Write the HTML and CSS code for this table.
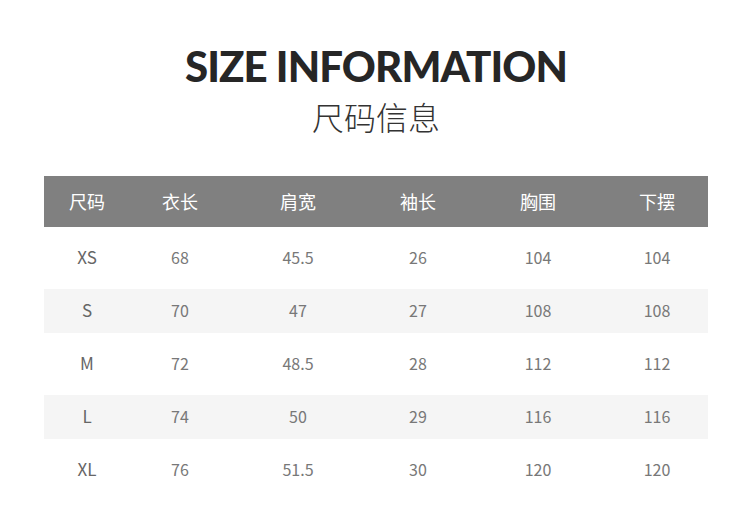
FILE: index.html
```html
<!DOCTYPE html>
<html lang="zh">
<head>
<meta charset="utf-8">
<link rel="stylesheet" href="styles.css">
</head>
<body>
<div class="page">
  <header class="heading">
    <h1 class="title-en">SIZE INFORMATION</h1>
    <h2 class="title-cn">尺码信息</h2>
  </header>
  <div class="table">
    <div class="row head">
      <div class="cell">尺码</div><div class="cell">衣长</div><div class="cell">肩宽</div><div class="cell">袖长</div><div class="cell">胸围</div><div class="cell">下摆</div>
    </div>
    <div class="row">
      <div class="cell size">XS</div><div class="cell">68</div><div class="cell">45.5</div><div class="cell">26</div><div class="cell">104</div><div class="cell">104</div>
    </div>
    <div class="row alt">
      <div class="cell size">S</div><div class="cell">70</div><div class="cell">47</div><div class="cell">27</div><div class="cell">108</div><div class="cell">108</div>
    </div>
    <div class="row">
      <div class="cell size">M</div><div class="cell">72</div><div class="cell">48.5</div><div class="cell">28</div><div class="cell">112</div><div class="cell">112</div>
    </div>
    <div class="row alt">
      <div class="cell size">L</div><div class="cell">74</div><div class="cell">50</div><div class="cell">29</div><div class="cell">116</div><div class="cell">116</div>
    </div>
    <div class="row">
      <div class="cell size">XL</div><div class="cell">76</div><div class="cell">51.5</div><div class="cell">30</div><div class="cell">120</div><div class="cell">120</div>
    </div>
  </div>
</div>
</body>
</html>
```
FILE: styles.css
```css
html, body {
  margin: 0;
  padding: 0;
  background: #ffffff;
}
.page {
  width: 750px;
  height: 508px;
  padding: 0 42px 0 44px;
  box-sizing: border-box;
  font-family: "Noto Sans CJK SC", "Noto Sans", sans-serif;
}
.heading {
  display: flex;
  flex-direction: column;
  align-items: center;
  padding-top: 42px;
  height: 176px;
  box-sizing: border-box;
}
.title-en {
  margin: 0;
  font-family: "Lato", sans-serif;
  font-weight: 900;
  font-size: 42px;
  line-height: 48px;
  color: #262626;
  letter-spacing: -0.9px;
}
.title-cn {
  margin: 0;
  margin-top: 6px;
  font-weight: 300;
  font-size: 32px;
  line-height: 40px;
  color: #333333;
}
.table {
  display: flex;
  flex-direction: column;
  gap: 9px;
}
.row {
  display: grid;
  grid-template-columns: 86px 100px 136px 104px 136px 102px;
  height: 44px;
  align-items: center;
  justify-items: center;
  font-size: 16px;
  line-height: 20px;
  padding-bottom: 2px;
  box-sizing: border-box;
  color: #787878;
}
.row.head {
  height: 51px;
  background: #808080;
  color: #ffffff;
  font-size: 18px;
}
.row.alt {
  background: #f5f5f5;
}
.cell.size {
  font-size: 17px;
  color: #666666;
}
```
